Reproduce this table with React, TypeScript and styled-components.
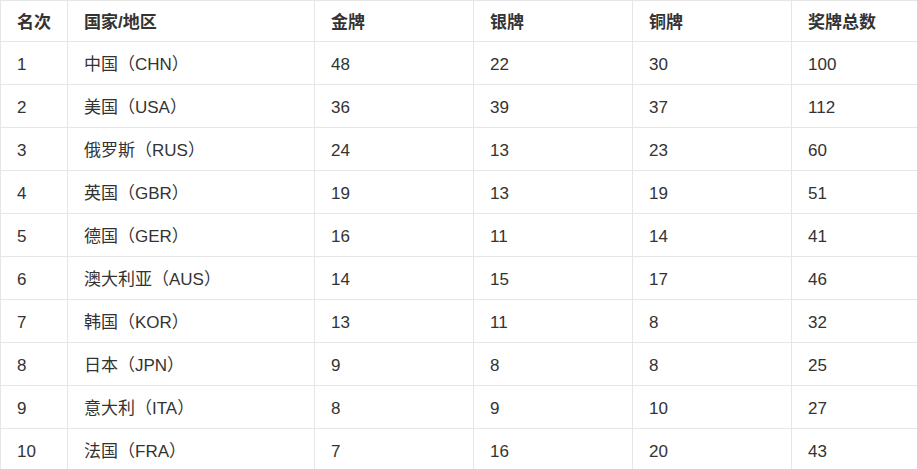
import styled, { createGlobalStyle } from 'styled-components'

const GlobalStyle = createGlobalStyle`
  html, body {
    margin: 0;
    padding: 0;
    background: #fff;
    overflow: hidden;
  }
  body {
    font-family: "Liberation Sans", "Noto Sans CJK SC", sans-serif;
    color: #333;
  }
`

const Table = styled.table`
  width: 951px;
  table-layout: fixed;
  border-collapse: collapse;
  font-size: 17px;
  line-height: 24px;
`

const HeadCell = styled.th<{ $w: number }>`
  width: ${({ $w }) => $w}px;
  height: 41px;
  padding: 3px 16px 0;
  box-sizing: border-box;
  border: 1px solid #e6e6e6;
  text-align: left;
  font-weight: bold;
  color: #333;
  vertical-align: middle;
`

const Cell = styled.td`
  height: 43px;
  padding: 3px 16px 0;
  box-sizing: border-box;
  border: 1px solid #e6e6e6;
  color: #333;
  vertical-align: middle;
  white-space: nowrap;
`

const columns = [
  { title: '名次', w: 67 },
  { title: '国家/地区', w: 247 },
  { title: '金牌', w: 159 },
  { title: '银牌', w: 159 },
  { title: '铜牌', w: 159 },
  { title: '奖牌总数', w: 160 },
]

const rows = [
  [1, '中国（CHN）', 48, 22, 30, 100],
  [2, '美国（USA）', 36, 39, 37, 112],
  [3, '俄罗斯（RUS）', 24, 13, 23, 60],
  [4, '英国（GBR）', 19, 13, 19, 51],
  [5, '德国（GER）', 16, 11, 14, 41],
  [6, '澳大利亚（AUS）', 14, 15, 17, 46],
  [7, '韩国（KOR）', 13, 11, 8, 32],
  [8, '日本（JPN）', 9, 8, 8, 25],
  [9, '意大利（ITA）', 8, 9, 10, 27],
  [10, '法国（FRA）', 7, 16, 20, 43],
]

export default function App() {
  return (
    <>
      <GlobalStyle />
      <Table>
        <thead>
          <tr>
            {columns.map((c) => (
              <HeadCell key={c.title} $w={c.w}>
                {c.title}
              </HeadCell>
            ))}
          </tr>
        </thead>
        <tbody>
          {rows.map((r) => (
            <tr key={r[0]}>
              {r.map((v, i) => (
                <Cell key={i}>{v}</Cell>
              ))}
            </tr>
          ))}
        </tbody>
      </Table>
    </>
  )
}
